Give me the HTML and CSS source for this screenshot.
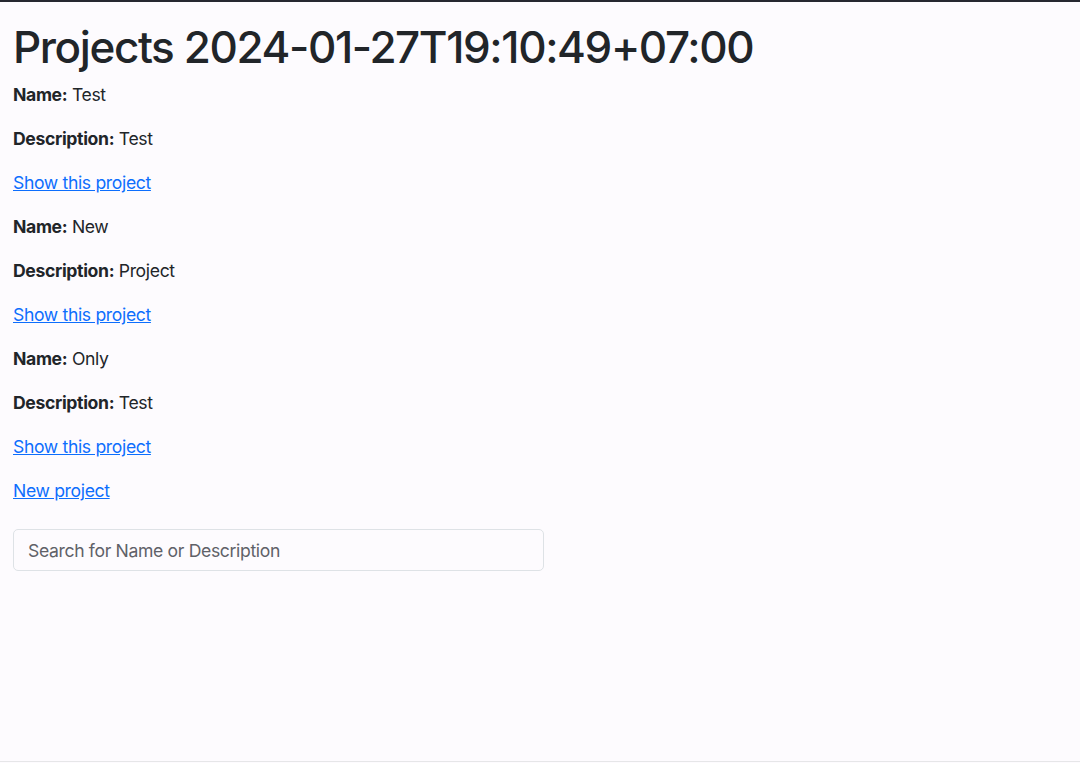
FILE: index.html
```html
<!DOCTYPE html>
<html lang="en">
<head>
<meta charset="utf-8">
<title>Projects</title>
<link rel="stylesheet" href="styles.css">
</head>
<body>
<div class="topbar"></div>
<main class="container">
  <h1 class="title">Projects 2024-01-27T19:10:49+07:00</h1>
  <div class="project">
    <p><strong>Name:</strong> Test</p>
    <p><strong>Description:</strong> Test</p>
  </div>
  <p><a href="#">Show this project</a></p>
  <div class="project">
    <p><strong>Name:</strong> New</p>
    <p><strong>Description:</strong> Project</p>
  </div>
  <p><a href="#">Show this project</a></p>
  <div class="project">
    <p><strong>Name:</strong> Only</p>
    <p><strong>Description:</strong> Test</p>
  </div>
  <p><a href="#">Show this project</a></p>
  <p><a href="#">New project</a></p>
  <form class="search">
    <input class="search-input" type="text" placeholder="Search for Name or Description">
  </form>
</main>
<div class="bottomline"></div>
</body>
</html>
```
FILE: styles.css
```css
html, body {
  margin: 0;
  padding: 0;
  height: 100%;
}
body {
  background: #fdfbfe;
  color: #212529;
  font-family: Inter, "Liberation Sans", sans-serif;
  font-size: 17.6px;
  line-height: 1.5;
  letter-spacing: -0.02em;
  display: flex;
  flex-direction: column;
}
.topbar {
  height: 2px;
  background: #262830;
  flex: none;
}
.container {
  flex: 1;
  padding: 0 13px;
}
.title {
  font-size: 44px;
  font-weight: 500;
  line-height: 1.2;
  letter-spacing: -1.4px;
  margin: 18.6px 0 8.8px;
}
p {
  margin: 0 0 17.6px;
}
strong {
  font-weight: 700;
}
a {
  color: #0d6efd;
  text-decoration: underline;
}
.search {
  margin-top: 25px;
}
.search-input {
  box-sizing: border-box;
  width: 531px;
  height: 42px;
  padding: 0 14px;
  font: inherit;
  letter-spacing: -0.02em;
  color: #212529;
  background: #fdfbfe;
  border: 1px solid #dee2e6;
  border-radius: 5px;
  outline: none;
}
.search-input::placeholder {
  color: #5f6168;
}
.bottomline {
  height: 1px;
  background: #e6e6e8;
  flex: none;
  margin-bottom: 1px;
}
```
